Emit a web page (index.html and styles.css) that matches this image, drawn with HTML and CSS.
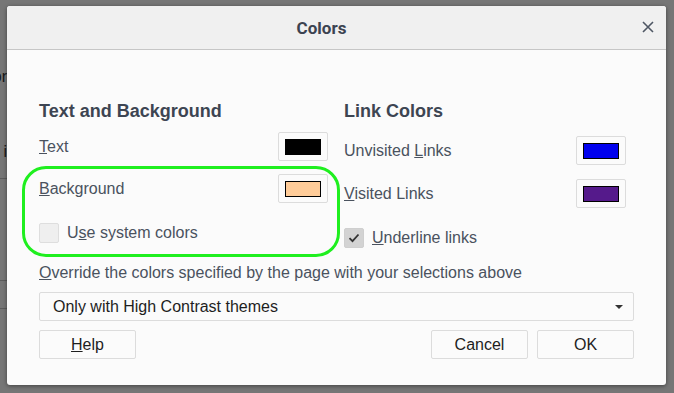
FILE: index.html
```html
<!DOCTYPE html>
<html>
<head lang="en">
    <meta charset="UTF-8">
    <title>Colors</title>
    <link rel="stylesheet" href="styles.css">
</head>
<body>
<div id="page">
    <div class="behind">
        <div class="behind-text first">Color</div>
        <div class="behind-text second">i</div>
        <div class="behind-line l1"></div>
        <div class="behind-line l2"></div>
        <div class="behind-line l3"></div>
    </div>

    <div id="dialog">
        <div class="dlg-head">
            <span class="dlg-title">Colors</span>
            <span class="dlg-close">
                <svg width="12" height="12" viewBox="0 0 12 12"><path d="M1 1L11 11M11 1L1 11" stroke="#4f5764" stroke-width="1.6" fill="none"/></svg>
            </span>
        </div>
        <div class="dlg-body">
            <div class="cols">
                <div class="col left">
                    <h2>Text and Background</h2>
                    <div class="row first-row">
                        <span class="lbl"><u>T</u>ext</span>
                        <button class="swatch"><span class="chip" style="background:#000000"></span></button>
                    </div>
                    <div class="ring">
                        <div class="row">
                            <span class="lbl"><u>B</u>ackground</span>
                            <button class="swatch"><span class="chip" style="background:#ffcc99"></span></button>
                        </div>
                        <div class="check">
                            <span class="box"></span>
                            <span class="lbl">U<u>s</u>e system colors</span>
                        </div>
                    </div>
                </div>
                <div class="col right">
                    <h2>Link Colors</h2>
                    <div class="row first-row">
                        <span class="lbl">Unvisited <u>L</u>inks</span>
                        <button class="swatch"><span class="chip" style="background:#0000ee"></span></button>
                    </div>
                    <div class="row">
                        <span class="lbl"><u>V</u>isited Links</span>
                        <button class="swatch"><span class="chip" style="background:#551a8b"></span></button>
                    </div>
                    <div class="check">
                        <span class="box on">
                            <svg width="12" height="10" viewBox="0 0 12 10"><path d="M1.5 5.2L4.5 8.2L10.5 1.5" stroke="#333" stroke-width="1.8" fill="none"/></svg>
                        </span>
                        <span class="lbl"><u>U</u>nderline links</span>
                    </div>
                </div>
            </div>

            <div class="override"><u>O</u>verride the colors specified by the page with your selections above</div>
            <div class="select">
                <span>Only with High Contrast themes</span>
                <span class="arrow"></span>
            </div>
            <div class="buttons">
                <button class="btn"><u>H</u>elp</button>
                <div class="spacer"></div>
                <button class="btn">Cancel</button>
                <button class="btn">OK</button>
            </div>
        </div>
    </div>
</div>
</body>
</html>
```

FILE: styles.css
```css
*{
    padding:0;
    margin:0;
    box-sizing: border-box;
}
body{
    background: #767676;
    font-family: "Liberation Sans", Arial, sans-serif;
    font-size: 16px;
    overflow: hidden;
}
#page{
    position: relative;
    width: 674px;
    height: 393px;
}

/* page behind the dialog, dimmed */
.behind{
    width: 7px;
    overflow: hidden;
}
.behind-text{
    direction: rtl;
    white-space: nowrap;
    color: #161616;
    line-height: 20px;
}
.behind-text.first{
    padding-top: 67px;
}
.behind-text.second{
    margin-top: 55px;
}
.behind-line{
    height: 1px;
    background: #5c5c5c;
}
.l1{ margin-top: 16px; }
.l2{ margin-top: 101px; }
.l3{ margin-top: 27px; }

#dialog{
    position: absolute;
    left: 7px;
    top: 6px;
    width: 659px;
    height: 379px;
    background: #fbfbfb;
    border-radius: 3px;
    box-shadow: 0 1px 4px rgba(0,0,0,0.45);
    overflow: hidden;
}
.dlg-head{
    height: 44px;
    background: #f0f0f0;
    border-bottom: 1px solid #c6c6c6;
    display: flex;
    align-items: center;
    justify-content: center;
    padding-right: 30px;
    position: relative;
}
.dlg-title{
    font-family: Roboto, "Liberation Sans", sans-serif;
    font-weight: bold;
    font-size: 17px;
    color: #3c4350;
}
.dlg-close{
    position: absolute;
    right: 12px;
    top: 15px;
    width: 12px;
    height: 12px;
}
.dlg-close svg{
    display: block;
}

.dlg-body{
    padding: 50px 32px 0 32px;
}
.cols{
    display: grid;
    grid-template-columns: 289px 282px;
    column-gap: 16px;
}
h2{
    font-size: 18px;
    line-height: 22px;
    font-weight: bold;
    color: #3d4552;
}
.lbl{
    color: #4a525e;
    line-height: 20px;
}
.row{
    display: flex;
    align-items: center;
    justify-content: space-between;
    height: 29px;
}
.left .first-row{ margin-top: 10px; }
.right .first-row{ margin-top: 14px; }
.right .row + .row{ margin-top: 14px; }
.ring{
    position: relative;
    margin-top: 13px;
}
.ring::before{
    content: "";
    position: absolute;
    top: -8px;
    left: -17px;
    right: -12px;
    bottom: -14px;
    border: 3px solid #1fef1f;
    border-radius: 24px;
}
.swatch{
    width: 50px;
    height: 29px;
    background: #fbfbfb;
    border: 1px solid #dcdcdc;
    border-radius: 2px;
    display: flex;
    align-items: center;
    justify-content: center;
}
.chip{
    display: block;
    width: 36px;
    height: 16px;
    border: 1px solid #000;
}
.check{
    display: flex;
    align-items: center;
    gap: 8px;
    height: 20px;
    margin-top: 20px;
}
.box{
    width: 20px;
    height: 20px;
    background: #efefef;
    border: 1px solid #dedede;
    border-radius: 2px;
    display: flex;
    align-items: center;
    justify-content: center;
}
.box.on{
    background: #d3d3d3;
    border-color: #cfcfcf;
}

.override{
    margin-top: 15px;
    line-height: 20px;
    color: #4a525e;
}
.select{
    margin-top: 9px;
    height: 29px;
    border: 1px solid #dcdcdc;
    border-radius: 2px;
    background: #fbfbfb;
    display: flex;
    align-items: center;
    justify-content: space-between;
    padding: 0 10px 0 13px;
    color: #1e1e1e;
}
.arrow{
    width: 0;
    height: 0;
    border-left: 4px solid transparent;
    border-right: 4px solid transparent;
    border-top: 4px solid #333;
}
.buttons{
    margin-top: 9px;
    display: flex;
    gap: 9px;
}
.spacer{
    flex: 1;
}
.btn{
    width: 97px;
    height: 29px;
    background: #fbfbfb;
    border: 1px solid #dcdcdc;
    border-radius: 2px;
    font-family: "Liberation Sans", Arial, sans-serif;
    font-size: 16px;
    color: #1e1e1e;
}
```
